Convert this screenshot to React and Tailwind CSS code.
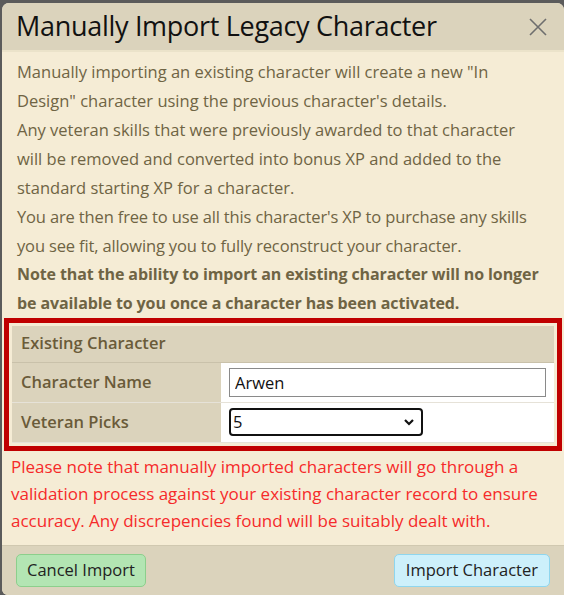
import React from "react";

const font = { fontFamily: '"Open Sans", "Noto Sans", sans-serif' };

export default function App() {
  return (
    <div className="w-[564px] h-[595px] bg-[#5b5b5b] pt-[3px] pl-[2px]" style={font}>
      <div className="h-[592px] rounded-t-[7px] rounded-bl-[6px] overflow-hidden bg-[#f5ecd5] flex flex-col">
        {/* Header */}
        <div className="h-[49px] shrink-0 bg-[#dbd3bc] border-b-2 border-[#ebe3ca] flex items-center justify-between pl-[14px] pr-[14px]">
          <h1 className="text-[27px] text-[#111] tracking-[-0.3px]">Manually Import Legacy Character</h1>
          <button className="w-[24px] h-[24px] flex items-center justify-center text-[#6e6e6e]">
            <svg width="20" height="20" viewBox="0 0 20 20" stroke="currentColor" strokeWidth="1.6" fill="none">
              <path d="M2 2 L18 18 M18 2 L2 18" />
            </svg>
          </button>
        </div>

        {/* Body */}
        <div className="pt-[5px] px-[15px] text-[16.5px] leading-[29px] text-[#6f6444] whitespace-nowrap">
          <p>Manually importing an existing character will create a new "In<br />Design" character using the previous character's details.</p>
          <p>Any veteran skills that were previously awarded to that character<br />will be removed and converted into bonus XP and added to the<br />standard starting XP for a character.</p>
          <p className="tracking-[-0.15px]">You are then free to use all this character's XP to purchase any skills<br />you see fit, allowing you to fully reconstruct your character.</p>
          <p className="font-bold text-[16px] tracking-[-0.1px]">Note that the ability to import an existing character will no longer<br />be available to you once a character has been activated.</p>
        </div>

        {/* Highlighted table */}
        <div className="ml-[2px] mr-[2px] border-[5px] border-[#c00000] p-[3px]">
          <table className="w-full border-collapse text-[16.5px] text-[#6a5b39] font-semibold">
            <tbody>
              <tr className="bg-[#dbd3bc] h-[36px] border-b border-[#c9c1aa]">
                <td colSpan={2} className="pl-[9px]">Existing Character</td>
              </tr>
              <tr className="h-[40px] border-b border-[#e6e2d8]">
                <td className="w-[209px] bg-[#dbd3bc] pl-[9px]">Character Name</td>
                <td className="bg-white px-[8px]">
                  <input
                    readOnly
                    value="Arwen"
                    className="w-full h-[29px] border border-[#8a8a8a] px-[5px] text-[16.5px] text-[#111] font-normal outline-none"
                    style={font}
                  />
                </td>
              </tr>
              <tr className="h-[40px] border-b border-[#e6e2d8]">
                <td className="bg-[#dbd3bc] pl-[9px]">Veteran Picks</td>
                <td className="bg-white px-[8px]">
                  <div className="w-[194px] h-[28px] border-2 border-[#111] rounded-[4px] flex items-center justify-between pl-[2px] pr-[6px] text-[16.5px] text-[#111] font-normal">
                    <span>5</span>
                    <svg width="12" height="12" viewBox="0 0 12 12" fill="none" stroke="#111" strokeWidth="2.2">
                      <path d="M2 4 L6 8 L10 4" />
                    </svg>
                  </div>
                </td>
              </tr>
            </tbody>
          </table>
        </div>

        {/* Warning */}
        <div className="pt-[2px] px-[9px] text-[17px] leading-[27px] text-[#f52a2a] whitespace-nowrap">
          Please note that manually imported characters will go through a<br />validation process against your existing character record to ensure<br />accuracy. Any discrepencies found will be suitably dealt with.
        </div>

        {/* Footer */}
        <div className="mt-auto h-[50px] bg-[#dbd3bc] border-t border-[#d0c8b0] flex items-center justify-between pl-[14px] pr-[14px]">
          <button className="h-[33px] px-[10px] rounded-[5px] bg-[#b3e5b3] border border-[#8ccf8c] text-[16.5px] text-[#222]">
            Cancel Import
          </button>
          <button className="h-[33px] px-[11px] rounded-[5px] bg-[#cdf0fb] border border-[#8fd6ee] text-[16.5px] text-[#222]">
            Import Character
          </button>
        </div>
      </div>
    </div>
  );
}
